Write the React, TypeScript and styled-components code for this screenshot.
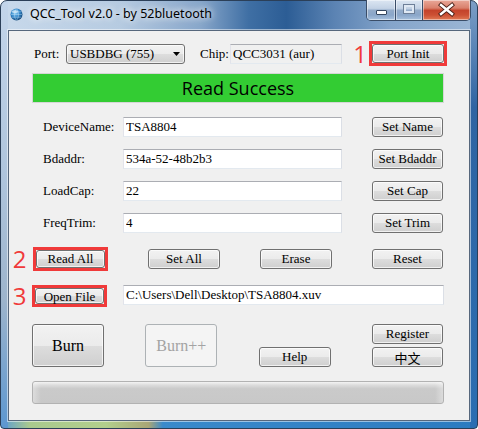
import React from 'react';
import styled, { createGlobalStyle } from 'styled-components';

const dialogFont = `"Liberation Serif", "Noto Sans CJK SC", serif`;

const GlobalStyle = createGlobalStyle`
  html, body {
    margin: 0;
    padding: 0;
    background: #ffffff;
  }
`;

const Window = styled.div`
  box-sizing: border-box;
  width: 478px;
  height: 429px;
  display: flex;
  flex-direction: column;
  padding: 0 7px 7px 7px;
  border: 1px solid #2b3f58;
  border-radius: 7px 7px 4px 4px;
  background:
    linear-gradient(180deg, #c3d5ea 0%, #afc5dd 40%, #9db4cc 70%, #5d97d0 100%) left top / 7px 100% no-repeat,
    linear-gradient(180deg, #7c9ec6 0%, #2f64a2 25%, #2b6eb2 100%) right top / 7px 100% no-repeat,
    linear-gradient(90deg, #5a9bd4 0%, #a9c98e 6%, #b2cf8c 22%, #a9a676 31%, #3a8acb 34%, #2c7bc0 100%) left bottom / 100% 7px no-repeat,
    linear-gradient(90deg, #c8d9eb 0%, #b6cbe1 25%, #87a6ca 42%, #3f6fa4 52%, #2c5d95 60%, #5b83b3 70%, #85a5cb 82%, #9cb7d5 100%);
`;

const TitleBar = styled.div`
  height: 29px;
  display: flex;
  align-items: flex-start;
`;

const AppIcon = styled.svg`
  margin: 7px 0 0 2px;
  flex: none;
`;

const Title = styled.span`
  margin: 5px 0 0 7px;
  font: 12.5px "Noto Sans", sans-serif;
  line-height: 16px;
  color: #000;
  text-shadow: 0 0 6px rgba(255, 255, 255, 0.95), 0 0 10px rgba(255, 255, 255, 0.8);
`;

const CaptionGroup = styled.div`
  margin: -1px -1px 0 auto;
  display: flex;
  height: 20px;
  border: 1px solid #3a4d68;
  border-top: none;
  border-radius: 0 0 5px 5px;
  overflow: hidden;
`;

const CaptionButton = styled.div<{ $w: number; $close?: boolean }>`
  width: ${p => p.$w}px;
  height: 100%;
  & + & {
    border-left: 1px solid #3a4d68;
  }
  background: ${p =>
    p.$close
      ? 'linear-gradient(180deg, #e9a899 0%, #d9806c 40%, #c4432b 52%, #cc5034 75%, #e07a55 100%)'
      : 'linear-gradient(180deg, #dce6f2 0%, #c3d2e5 42%, #93abc9 52%, #8aa6c9 75%, #a9c2de 100%)'};
  box-shadow: inset 0 0 0 1px rgba(255, 255, 255, 0.45);
`;

const Client = styled.div`
  flex: 1;
  display: flex;
  flex-direction: column;
  background: #f0f0f0;
  border: 1px solid #56677c;
  box-shadow: 0 0 0 1px rgba(255, 255, 255, 0.5);
`;

const TopRow = styled.div`
  display: flex;
  align-items: center;
  height: 25px;
  margin-top: 10px;
  padding-left: 25px;
`;

const Label = styled.span<{ $w: number; $ml?: number }>`
  width: ${p => p.$w}px;
  margin-left: ${p => p.$ml ?? 0}px;
  flex: none;
  font: 13px ${dialogFont};
  color: #000;
  white-space: pre;
`;

const Combo = styled.div`
  box-sizing: border-box;
  width: 119px;
  height: 20px;
  display: flex;
  align-items: center;
  justify-content: space-between;
  padding: 0 4px 0 3px;
  border: 1px solid #707070;
  border-radius: 3px;
  background: linear-gradient(180deg, #f2f2f2 0%, #ebebeb 50%, #dddddd 51%, #cfcfcf 100%);
  box-shadow: inset 0 0 0 1px rgba(255, 255, 255, 0.7);
  font: 13px ${dialogFont};
  white-space: pre;
`;

const TextBox = styled.input<{ $w: number; $gray?: boolean }>`
  box-sizing: border-box;
  width: ${p => p.$w}px;
  height: 20px;
  flex: none;
  margin: 0;
  padding: 0 2px;
  border: 1px solid;
  border-color: #abadb3 #dbdfe6 #e3e9ef #e2e3ea;
  background: ${p => (p.$gray ? '#f0f0f0' : '#ffffff')};
  font: 13px ${dialogFont};
  color: #000;
  outline: none;
`;

const Marker = styled.span<{ $w: number; $ml?: number; $mr: number }>`
  width: ${p => p.$w}px;
  margin-left: ${p => p.$ml ?? 0}px;
  margin-right: ${p => p.$mr}px;
  flex: none;
  text-align: center;
  font: 24px "Open Sans", sans-serif;
  line-height: 24px;
  color: #f03a3a;
  align-self: center;
`;

const Highlight = styled.div`
  display: flex;
  flex: none;
  border: 3px solid #f03a3a;
`;

const WinButton = styled.button<{ $w?: number; $h?: number }>`
  box-sizing: border-box;
  width: ${p => p.$w ?? 72}px;
  height: ${p => p.$h ?? 20}px;
  flex: none;
  margin: 0;
  padding: 0;
  border: 1px solid #707070;
  border-radius: 3px;
  background: linear-gradient(180deg, #f2f2f2 0%, #ebebeb 50%, #dddddd 51%, #cfcfcf 100%);
  box-shadow: inset 0 0 0 1px rgba(255, 255, 255, 0.7);
  font: 13px ${dialogFont};
  color: #000;
  white-space: pre;
  &:disabled {
    border-color: #adb2b5;
    background: #f4f4f4;
    box-shadow: none;
    color: #a3a3a3;
  }
`;

const BigButton = styled(WinButton)`
  height: 43px;
  font: 16px "Liberation Serif", serif;
`;

const StatusBar = styled.div`
  box-sizing: border-box;
  width: 412px;
  height: 30px;
  margin: 7px 0 0 23px;
  display: flex;
  align-items: center;
  justify-content: center;
  background: #33cc33;
  border: 1px solid #d6d6d6;
  font: 18px "Open Sans", sans-serif;
  color: #000;
`;

const FieldList = styled.div`
  display: flex;
  flex-direction: column;
  gap: 12px;
  margin-top: 14px;
`;

const FieldRow = styled.div`
  display: flex;
  align-items: center;
  height: 20px;
  padding-left: 34px;
  & > button {
    margin-left: 30px;
  }
`;

const ActionRow = styled.div`
  display: flex;
  align-items: center;
  height: 24px;
  margin-top: 14px;
  padding-left: 2px;
`;

const ButtonStrip = styled.div<{ $w: number }>`
  width: ${p => p.$w}px;
  display: flex;
  justify-content: space-between;
  align-items: center;
`;

const FileRow = styled.div`
  display: flex;
  align-items: flex-start;
  height: 22px;
  margin-top: 14px;
  padding-left: 2px;
  & > input {
    margin-left: 16px;
  }
`;

const BurnRow = styled.div`
  display: flex;
  justify-content: space-between;
  align-items: stretch;
  width: 411px;
  height: 43px;
  margin: 17px 0 0 23px;
  & > button:nth-child(3) {
    align-self: flex-end;
  }
`;

const ButtonStack = styled.div`
  display: flex;
  flex-direction: column;
  gap: 3px;
`;

const Progress = styled.div`
  box-sizing: border-box;
  width: 412px;
  height: 23px;
  margin: 14px 0 0 23px;
  border: 1px solid #b2b2b2;
  border-radius: 3px;
  background:
    linear-gradient(90deg, rgba(255, 255, 255, 0.35) 0, rgba(255, 255, 255, 0) 8px, rgba(255, 255, 255, 0) calc(100% - 8px), rgba(255, 255, 255, 0.35) 100%),
    linear-gradient(180deg, #f3f3f3 0%, #dddddd 14%, #cacaca 32%, #c8c8c8 100%);
`;

const fields = [
  { label: 'DeviceName:', value: 'TSA8804', action: 'Set Name' },
  { label: 'Bdaddr:', value: '534a-52-48b2b3', action: 'Set Bdaddr' },
  { label: 'LoadCap:', value: '22', action: 'Set Cap' },
  { label: 'FreqTrim:', value: '4', action: 'Set Trim' },
];

const Globe = () => (
  <AppIcon width="13" height="13" viewBox="0 0 13 13">
    <defs>
      <radialGradient id="gl" cx="0.4" cy="0.35" r="0.7">
        <stop offset="0" stopColor="#8fd0f7" />
        <stop offset="0.55" stopColor="#2f83c6" />
        <stop offset="1" stopColor="#10406f" />
      </radialGradient>
    </defs>
    <circle cx="6.5" cy="6.5" r="6" fill="url(#gl)" />
    <path d="M6.5 0.8 C3.8 3 3.8 10 6.5 12.2 M6.5 0.8 C9.2 3 9.2 10 6.5 12.2 M1 6.5 H12 M1.8 3.8 H11.2 M1.8 9.2 H11.2" stroke="#cfe9fb" strokeOpacity="0.55" strokeWidth="0.7" fill="none" />
    <ellipse cx="5" cy="3.6" rx="3" ry="1.6" fill="#ffffff" fillOpacity="0.45" />
  </AppIcon>
);

const App: React.FC = () => {
  return (
    <>
      <GlobalStyle />
      <Window>
        <TitleBar>
          <Globe />
          <Title>QCC_Tool v2.0 - by 52bluetooth</Title>
          <CaptionGroup>
            <CaptionButton $w={28}>
              <svg width="28" height="20" viewBox="0 0 28 20">
                <rect x="9.5" y="10.5" width="10" height="4" rx="0.5" fill="#ffffff" stroke="#34465e" />
              </svg>
            </CaptionButton>
            <CaptionButton $w={26}>
              <svg width="26" height="20" viewBox="0 0 26 20">
                <rect x="7.5" y="4.5" width="11" height="9" fill="none" stroke="#6d7f98" />
                <rect x="9" y="6" width="8" height="6" fill="none" stroke="#dfe8f3" strokeWidth="2" />
              </svg>
            </CaptionButton>
            <CaptionButton $w={47} $close>
              <svg width="47" height="20" viewBox="0 0 47 20">
                <path d="M18 5 L29 14 M29 5 L18 14" stroke="#4a2018" strokeWidth="4.2" strokeLinecap="square" />
                <path d="M18 5 L29 14 M29 5 L18 14" stroke="#ffffff" strokeWidth="2.4" strokeLinecap="square" />
              </svg>
            </CaptionButton>
          </CaptionGroup>
        </TitleBar>

        <Client>
          <TopRow>
            <Label $w={32}>Port:</Label>
            <Combo>
              <span>USBDBG (755)</span>
              <svg width="7" height="4" viewBox="0 0 7 4">
                <path d="M0 0 H7 L3.5 4 Z" fill="#000" />
              </svg>
            </Combo>
            <Label $w={30} $ml={15}>Chip:</Label>
            <TextBox $w={112} $gray readOnly value="QCC3031 (aur)" />
            <Marker $w={16} $ml={10} $mr={1}>1</Marker>
            <Highlight>
              <WinButton $w={72} $h={19}>Port Init</WinButton>
            </Highlight>
          </TopRow>

          <StatusBar>Read Success</StatusBar>

          <FieldList>
            {fields.map(f => (
              <FieldRow key={f.label}>
                <Label $w={80}>{f.label}</Label>
                <TextBox $w={219} readOnly value={f.value} />
                <WinButton $w={71}>{f.action}</WinButton>
              </FieldRow>
            ))}
          </FieldList>

          <ActionRow>
            <Marker $w={17} $mr={5}>2</Marker>
            <ButtonStrip $w={410}>
              <Highlight>
                <WinButton $w={69} $h={18}>Read All</WinButton>
              </Highlight>
              <WinButton>Set All</WinButton>
              <WinButton>Erase</WinButton>
              <WinButton $w={71}>Reset</WinButton>
            </ButtonStrip>
          </ActionRow>

          <FileRow>
            <Marker $w={17} $mr={4}>3</Marker>
            <Highlight>
              <WinButton $w={69} $h={16}>Open File</WinButton>
            </Highlight>
            <TextBox $w={321} readOnly value={'C:\\Users\\Dell\\Desktop\\TSA8804.xuv'} />
          </FileRow>

          <BurnRow>
            <BigButton>Burn</BigButton>
            <BigButton disabled>Burn++</BigButton>
            <WinButton>Help</WinButton>
            <ButtonStack>
              <WinButton $w={71}>Register</WinButton>
              <WinButton $w={71}>中文</WinButton>
            </ButtonStack>
          </BurnRow>

          <Progress />
        </Client>
      </Window>
    </>
  );
};

export default App;
